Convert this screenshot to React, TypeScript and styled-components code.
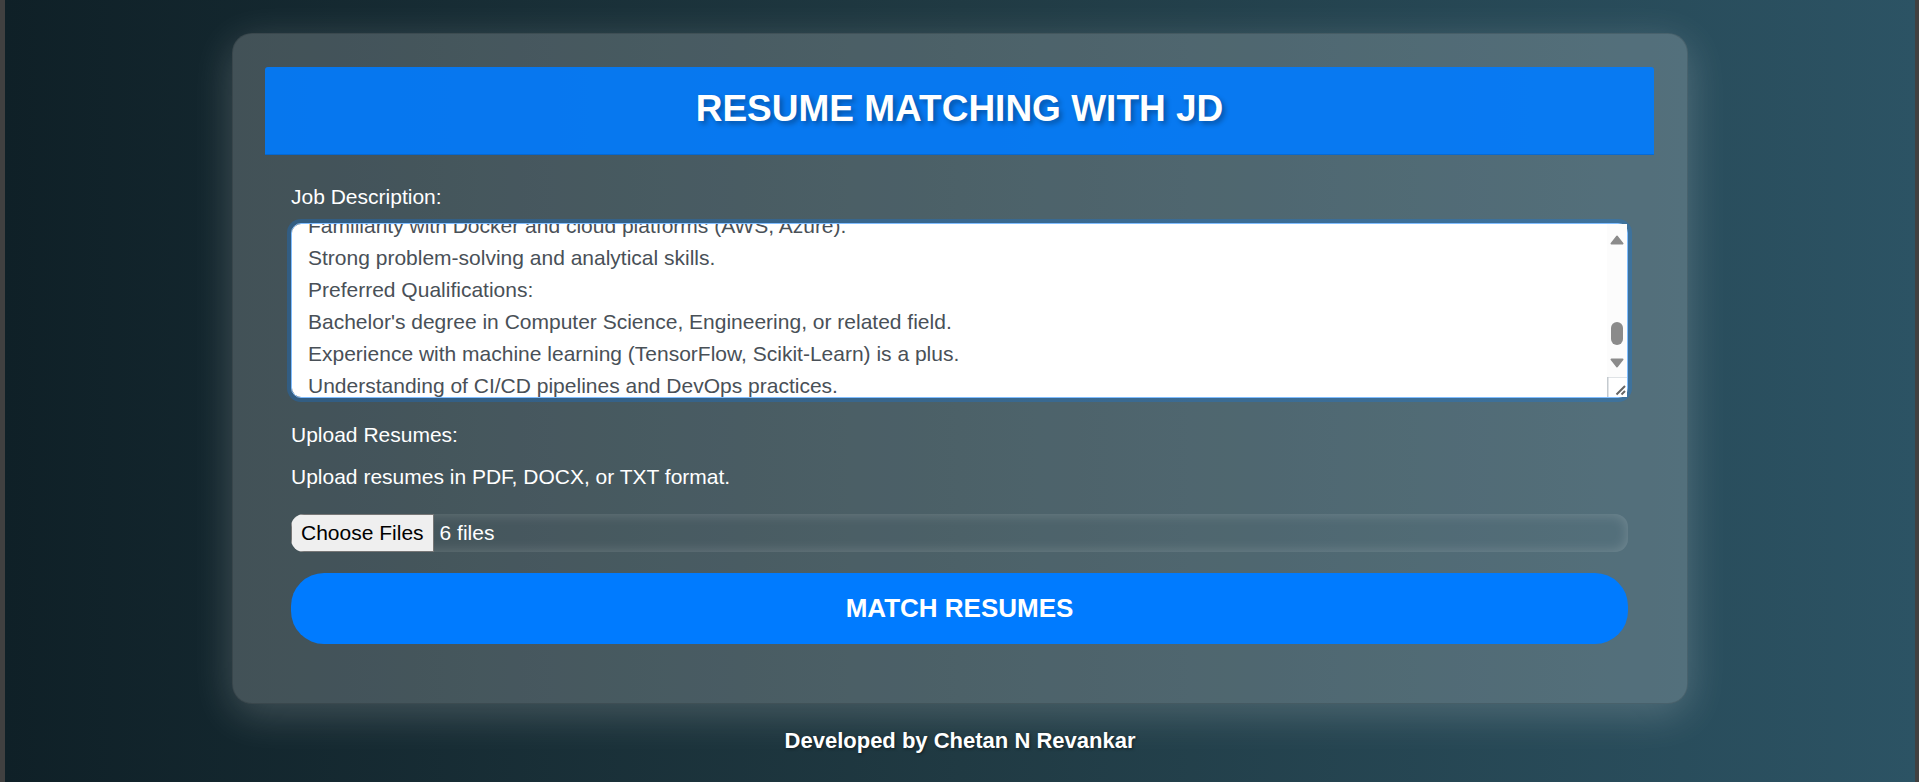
import React, { useEffect, useRef } from "react";
import styled, { createGlobalStyle } from "styled-components";

const GlobalStyle = createGlobalStyle`
  *, *::before, *::after { box-sizing: border-box; }
  body {
    margin: 0;
    font-family: "Liberation Sans", Arial, sans-serif;
    font-size: 21px;
    line-height: 32px;
    color: #fff;
  }
`;

const Page = styled.div`
  display: flex;
  flex-direction: column;
  align-items: center;
  min-height: 100vh;
  padding: 33px 26px 0;
  border: solid #404040;
  border-width: 0 4px 0 5px;
  background: linear-gradient(to right, #0f2027, #203a43, #2c5364) padding-box;
`;

const Card = styled.main`
  width: 100%;
  max-width: 1456px;
  padding: 33px 33px 33px 32px;
  border: 1px solid rgba(0, 0, 0, 0.12);
  border-radius: 20px;
  background: rgba(255, 255, 255, 0.2);
  box-shadow: 0 10px 42px rgba(255, 255, 255, 0.2);
`;

const CardHeader = styled.header`
  padding: 19px 26px 22px;
  border-bottom: 1px solid rgba(0, 0, 0, 0.12);
  border-radius: 3px 3px 0 0;
  background: rgba(0, 123, 255, 0.9);
  text-align: center;
`;

const Title = styled.h1`
  margin: 0;
  font-size: 37px;
  line-height: 46px;
  text-transform: uppercase;
  text-shadow: 3px 3px 5px rgba(0, 0, 0, 0.3);
`;

const Form = styled.form`
  display: flex;
  flex-direction: column;
  gap: 21px;
  padding: 26px;
`;

const Field = styled.div`
  display: flex;
  flex-direction: column;
`;

const Label = styled.label`
  margin-bottom: 10px;
`;

const Hint = styled.p`
  margin: 0 0 21px;
`;

const TextAreaWrap = styled.div`
  position: relative;
  display: flex;
`;

const TextArea = styled.textarea`
  width: 100%;
  height: 175px;
  padding: 8px 32px 8px 16px;
  border: 1px solid #80bdff;
  border-radius: 10px;
  outline: none;
  resize: none;
  scrollbar-width: none;
  background: #fff;
  box-shadow: 0 0 0 4px rgba(0, 123, 255, 0.25);
  color: #495057;
  font: inherit;
`;

const ScrollRail = styled.div`
  position: absolute;
  top: 1px;
  right: 1px;
  bottom: 1px;
  width: 20px;
  display: flex;
  flex-direction: column;
  align-items: center;
  justify-content: space-between;
  background: #fcfcfc;
  pointer-events: none;
`;

const FileInput = styled.input`
  width: 100%;
  height: 38px;
  border-radius: 13px;
  overflow: hidden;
  box-shadow: inset 0 0 13px rgba(255, 255, 255, 0.2);
  color: #fff;
  font: inherit;
  line-height: 36px;

  &::file-selector-button {
    height: 38px;
    margin: 0 6px 0 0;
    padding: 0 9px;
    border: 1px solid #767676;
    border-radius: 0;
    background: #efefef;
    color: #000;
    font: inherit;
  }
`;

const SubmitButton = styled.button`
  height: 71px;
  border: 0;
  border-radius: 33px;
  background: #007bff;
  color: #fff;
  font-family: inherit;
  font-size: 26px;
  font-weight: bold;
  text-transform: uppercase;
  cursor: pointer;
`;

const Footer = styled.footer`
  padding: 21px 0;
  font-size: 22px;
  font-weight: bold;
  text-shadow: 1px 1px 3px rgba(0, 0, 0, 0.5);
`;

const jobDescription = `Job Title: Python Developer
Required Skills:
Strong experience with Python and SQL.
Familiarity with Docker and cloud platforms (AWS, Azure).
Strong problem-solving and analytical skills.
Preferred Qualifications:
Bachelor's degree in Computer Science, Engineering, or related field.
Experience with machine learning (TensorFlow, Scikit-Learn) is a plus.
Understanding of CI/CD pipelines and DevOps practices.
Good communication skills.`;

const LINE_HEIGHT = 32;
const FIRST_VISIBLE_LINE = 3;

function ScrollBar() {
  return (
    <ScrollRail aria-hidden="true">
      <svg width="20" height="153" viewBox="0 0 20 153">
        <g fill="#8b8b8b" stroke="#8b8b8b" strokeWidth="2" strokeLinejoin="round">
          <path d="M10 12.5 L15.5 19.5 H4.5 Z" />
          <path d="M4.5 135.5 H15.5 L10 142.5 Z" />
        </g>
        <rect x="4" y="98" width="12" height="23" rx="6" fill="#8b8b8b" />
      </svg>
      <svg width="20" height="20" viewBox="0 0 20 20">
        <rect width="20" height="20" fill="#fff" />
        <path d="M0 0.5 H20" stroke="#dfe3e6" />
        <path d="M0.5 0 V20" stroke="#c4cacf" strokeWidth="2" />
        <path d="M9.5 17.5 L18 9 M14.5 17.5 L18 14" stroke="#666" strokeWidth="2" />
      </svg>
    </ScrollRail>
  );
}

export default function App() {
  const descriptionRef = useRef<HTMLTextAreaElement>(null);
  const filesRef = useRef<HTMLInputElement>(null);

  useEffect(() => {
    if (descriptionRef.current) {
      descriptionRef.current.scrollTop = FIRST_VISIBLE_LINE * LINE_HEIGHT + 22;
    }
    if (filesRef.current) {
      const transfer = new DataTransfer();
      for (let i = 1; i <= 6; i++) {
        transfer.items.add(new File(["resume"], `resume-${i}.pdf`));
      }
      filesRef.current.files = transfer.files;
    }
  }, []);

  return (
    <>
      <GlobalStyle />
      <Page>
        <Card>
          <CardHeader>
            <Title>Resume Matching with JD</Title>
          </CardHeader>
          <Form onSubmit={(event) => event.preventDefault()}>
            <Field>
              <Label htmlFor="job-description">Job Description:</Label>
              <TextAreaWrap>
                <TextArea
                  id="job-description"
                  ref={descriptionRef}
                  defaultValue={jobDescription}
                  spellCheck={false}
                />
                <ScrollBar />
              </TextAreaWrap>
            </Field>
            <Field>
              <Label htmlFor="resumes">Upload Resumes:</Label>
              <Hint id="resumes-hint">Upload resumes in PDF, DOCX, or TXT format.</Hint>
              <FileInput
                id="resumes"
                type="file"
                multiple
                accept=".pdf,.docx,.txt"
                aria-describedby="resumes-hint"
                ref={filesRef}
              />
            </Field>
            <SubmitButton type="submit">Match Resumes</SubmitButton>
          </Form>
        </Card>
        <Footer>Developed by Chetan N Revankar</Footer>
      </Page>
    </>
  );
}
